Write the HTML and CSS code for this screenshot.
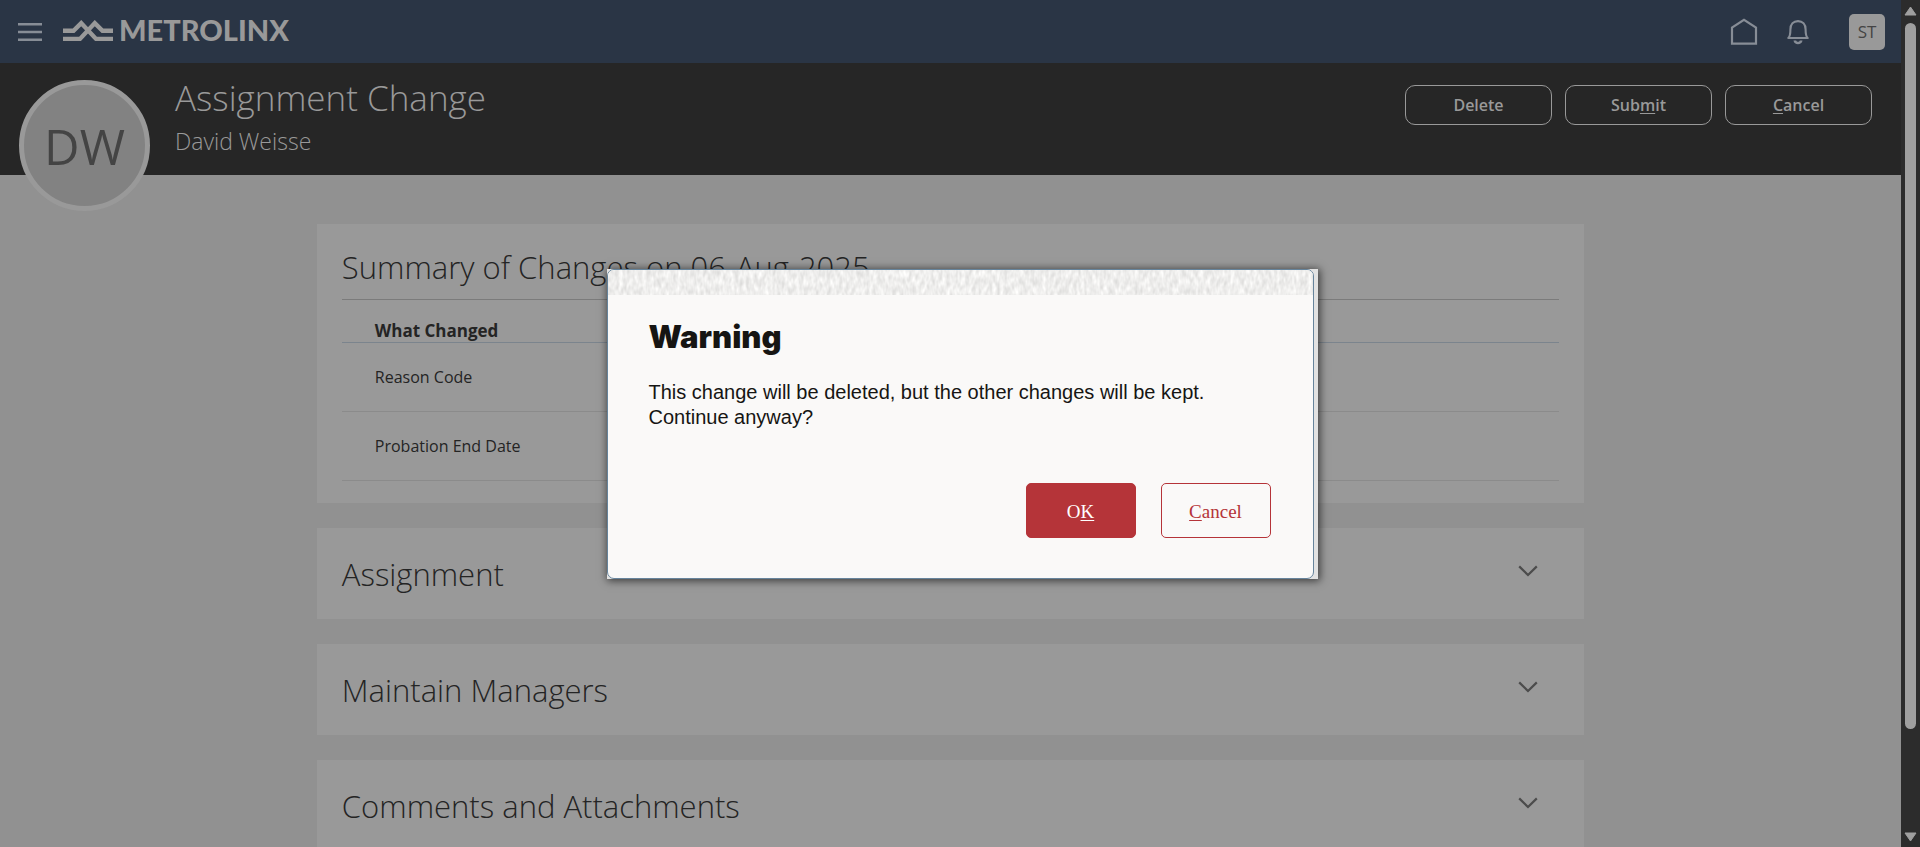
FILE: index.html
```html
<!DOCTYPE html>
<html lang="en">
<head>
<meta charset="utf-8">
<title>Assignment Change</title>
<link rel="stylesheet" href="styles.css">
</head>
<body>
<div class="page">
  <header class="topbar">
    <button class="icon-button" aria-label="Menu">
      <svg width="24" height="18" viewBox="0 0 24 18"><path d="M0 1.3h24M0 9h24M0 16.7h24" stroke="#878d96" stroke-width="2.4"/></svg>
    </button>
    <a class="brand" href="#">
      <svg width="50" height="22" viewBox="0 0 50 22" fill="none" stroke="#999" stroke-width="4.4"><path d="M0 10.8h10.5L18.2 3.1L33 18.9H50"/><path d="M0 18.9h17L31.8 3.1L39.500 10.800H50"/></svg>
      <span class="brand-name">METROLINX</span>
    </a>
    <nav class="tools">
      <button class="icon-button" aria-label="Home">
        <svg width="28" height="28" viewBox="0 0 28 28" fill="none" stroke="#878d96" stroke-width="2.2"><path d="M2 25.700V9.500L14 1.900L26 9.500V25.700Z"/></svg>
      </button>
      <button class="icon-button" aria-label="Notifications">
        <svg width="22" height="26" viewBox="0 0 22 26" fill="none" stroke="#878d96" stroke-width="2.1"><path d="M1.300 19C3.300 17.300 3.400 14.500 3.400 10.500C3.400 5.100 6.500 2.100 11 2.100S18.600 5.100 18.600 10.500C18.600 14.500 18.700 17.300 20.700 19Z" stroke-linejoin="round"/><path d="M6.500 21.500H9.200C9.500 23.200 12.500 23.200 12.800 21.500H15.500C15 26.600 7 26.600 6.500 21.500Z" fill="#878d96" stroke="none"/></svg>
      </button>
      <button class="user">ST</button>
    </nav>
  </header>
  <section class="band">
    <div class="avatar">DW</div>
    <div class="titles">
      <h1>Assignment Change</h1>
      <p>David Weisse</p>
    </div>
    <div class="actions">
      <button>Delete</button>
      <button>Sub<u>m</u>it</button>
      <button><u>C</u>ancel</button>
    </div>
  </section>
  <main class="content">
    <section class="card summary">
      <h2>Summary of Changes on 06-Aug-2025</h2>
      <table>
        <thead><tr><th scope="col">What Changed</th></tr></thead>
        <tbody>
          <tr><td>Reason Code</td></tr>
          <tr><td>Probation End Date</td></tr>
        </tbody>
      </table>
    </section>
    <section class="card fold">
      <h2>Assignment</h2>
      <button class="icon-button" aria-label="Expand Assignment"><svg width="20" height="12" viewBox="0 0 20 12"><path d="M1.200 1.400L10 10L18.800 1.400"/></svg></button>
    </section>
    <section class="card fold">
      <h2>Maintain Managers</h2>
      <button class="icon-button" aria-label="Expand Maintain Managers"><svg width="20" height="12" viewBox="0 0 20 12"><path d="M1.200 1.400L10 10L18.800 1.400"/></svg></button>
    </section>
    <section class="card fold">
      <h2>Comments and Attachments</h2>
      <button class="icon-button" aria-label="Expand Comments and Attachments"><svg width="20" height="12" viewBox="0 0 20 12"><path d="M1.200 1.400L10 10L18.800 1.400"/></svg></button>
    </section>
  </main>
</div>
<div class="scroller" aria-hidden="true">
  <svg width="13" height="10" viewBox="0 0 13 10"><path d="M6.500 1L12 9H1Z"/></svg>
  <div class="track"><div class="thumb"></div></div>
  <svg width="13" height="10" viewBox="0 0 13 10"><path d="M6.500 9L12 1H1Z"/></svg>
</div>
<div class="overlay">
  <div class="frame">
    <div class="dialog" role="alertdialog" aria-labelledby="dialog-title" aria-describedby="dialog-text">
      <svg class="grip" aria-hidden="true">
        <filter id="grain" x="0" y="0" width="100%" height="100%" color-interpolation-filters="sRGB">
          <feTurbulence type="fractalNoise" baseFrequency="0.26 0.12" numOctaves="2" seed="4"/>
          <feColorMatrix values="0.2 0 0 0 0.835  0.2 0 0 0 0.833  0.2 0 0 0 0.828  0 0 0 0 1"/>
        </filter>
        <rect width="100%" height="100%" filter="url(#grain)"/>
      </svg>
      <div class="dialog-body">
        <h2 id="dialog-title">Warning</h2>
        <p id="dialog-text">This change will be deleted, but the other changes will be kept.<br>Continue anyway?</p>
        <div class="dialog-actions">
          <button class="primary">O<u>K</u></button>
          <button><u>C</u>ancel</button>
        </div>
      </div>
    </div>
  </div>
</div>
</body>
</html>
```
FILE: styles.css
```css
* { box-sizing: border-box; }
body {
  margin: 0;
  height: 100vh;
  display: flex;
  overflow: hidden;
  background: #919191;
  color: #242424;
  font-family: "Open Sans", "Noto Sans", sans-serif;
}
h1, h2, p { margin: 0; font-weight: 300; }
button { font: inherit; cursor: pointer; }
svg { display: block; }
u { text-underline-offset: 2px; text-decoration-thickness: 1px; }

.page { flex: 1; min-width: 0; }
.icon-button { padding: 0; border: 0; background: none; }

.topbar {
  display: flex;
  align-items: center;
  height: 63px;
  padding: 0 16px 0 18px;
  background: #2a3545;
}
.brand {
  display: flex;
  align-items: center;
  gap: 6px;
  margin: 0 0 2px 21px;
  color: #999;
  text-decoration: none;
}
.brand-name { padding-bottom: 2px; font: 900 29px/30px Lato, sans-serif; }
.tools { display: flex; align-items: center; gap: 29px; margin-left: auto; }
.user {
  width: 36px;
  height: 36px;
  margin-left: 11px;
  padding: 0;
  border: 0;
  border-radius: 5px;
  background: #999;
  color: #444;
  font-size: 17px;
}

.band {
  display: flex;
  align-items: flex-start;
  height: 112px;
  padding: 17px 29px 0 19px;
  background: #262626;
  color: #999;
}
.avatar {
  width: 131px;
  height: 131px;
  border: 5px solid #999;
  border-radius: 50%;
  background: #828282;
  color: #444;
  font-size: 49px;
  line-height: 123px;
  text-align: center;
}
.titles { margin-left: 25px; }
.titles h1 { font-size: 35px; line-height: 36px; }
.titles p { margin-top: 9px; font-size: 23px; line-height: 32px; }
.actions { display: flex; gap: 13px; margin: 5px 0 0 auto; }
.actions button {
  width: 147px;
  height: 40px;
  border: 1px solid #999;
  border-radius: 10px;
  background: none;
  color: #999;
  font-size: 16px;
  font-weight: 600;
}

.content {
  display: flex;
  flex-direction: column;
  gap: 25px;
  width: 66.667%;
  margin: 0 auto;
  padding-top: 49px;
}
.card { padding: 0 25px; background: #999; }
.card h2 { font-size: 31px; line-height: 46px; }
.summary { padding-top: 20px; padding-bottom: 22px; }
.summary table {
  width: 100%;
  margin-top: 9px;
  border-collapse: collapse;
  border-top: 1px solid #7b7b7b;
  line-height: 24px;
}
.summary th, .summary td { padding: 0 33px; text-align: left; }
.summary th { height: 42px; padding-top: 20px; border-bottom: 1px solid #7b848d; font-size: 17px; line-height: 22px; font-weight: 700; }
.summary td { height: 69px; border-bottom: 1px solid #8b8b8b; font-size: 16px; }
.fold { display: flex; align-items: center; justify-content: space-between; height: 91px; }
.fold .icon-button { margin: 0 21px 6px 0; }
.fold path { fill: none; stroke: #4c4c4c; stroke-width: 2.2; }

.scroller {
  display: flex;
  flex-direction: column;
  align-items: center;
  gap: 7px;
  width: 19px;
  padding: 6px 0 5px;
  background: #2c2c2c;
}
.scroller path { fill: #9f9f9f; stroke: #9f9f9f; stroke-linejoin: round; }
.track { flex: 1; width: 11px; }
.thumb { height: 88%; border-radius: 6px; background: #9f9f9f; }

.overlay {
  position: absolute;
  inset: 0;
  display: flex;
  align-items: center;
  justify-content: center;
  padding-left: 4px;
}
.frame {
  padding-right: 4px;
  background: #e2e2e2;
  box-shadow: 1px 1px 8px 1px rgba(0, 0, 0, 0.6);
}
.dialog {
  width: 707px;
  border: 1px solid #66849c;
  border-radius: 7px;
  overflow: hidden;
  background: #faf9f8;
  color: #161513;
}
.grip { width: 100%; height: 25px; }
.dialog-body { padding: 23px 42px 40px 41px; }
.dialog h2 { font: 900 31px/38px Inter, sans-serif; }
.dialog p { margin-top: 24px; font: 20px/25px "Liberation Sans", Arial, sans-serif; }
.dialog-actions { display: flex; justify-content: flex-end; gap: 25px; margin-top: 53px; }
.dialog-actions button {
  width: 110px;
  height: 55px;
  padding-top: 4px;
  border: 1px solid #b53439;
  border-radius: 5px;
  background: none;
  color: #b53439;
  font: 19px "Liberation Serif", "Times New Roman", serif;
}
.dialog-actions .primary { background: #b53439; color: #fff; }
```
